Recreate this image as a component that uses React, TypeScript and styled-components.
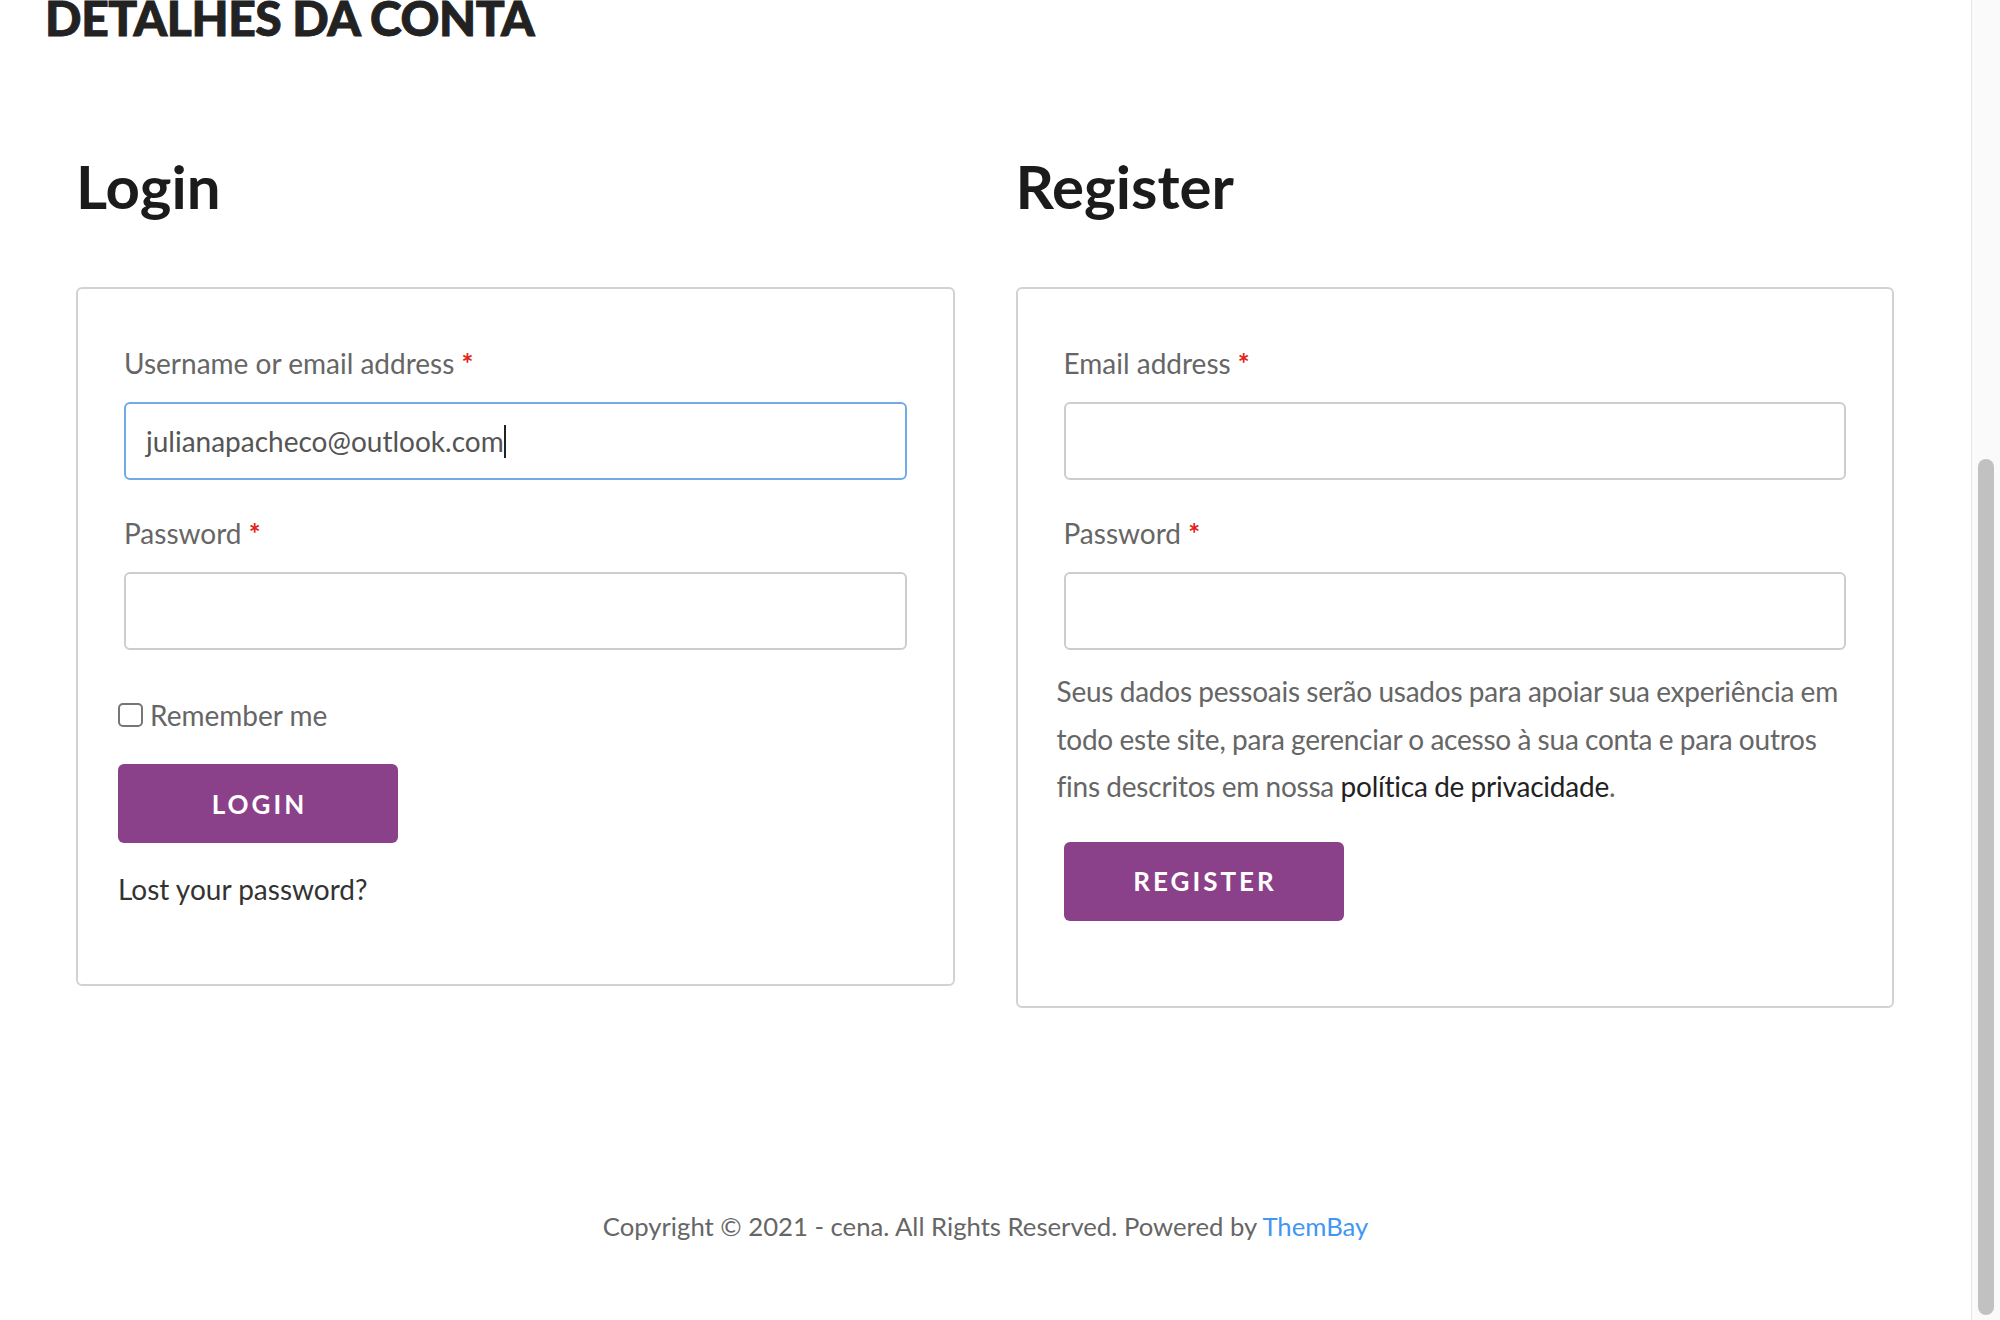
import React from "react";
import styled, { createGlobalStyle } from "styled-components";

const GlobalStyle = createGlobalStyle`
  * { box-sizing: border-box; }
  html, body { margin: 0; padding: 0; background: #ffffff; }
  body { font-family: Lato, "Open Sans", Arial, sans-serif; overflow: hidden; }
`;

const Page = styled.div`
  display: flex;
  width: 2000px;
  height: 1320px;
  overflow: hidden;
  background: #ffffff;
`;

const Main = styled.main`
  flex: 1;
  display: flex;
  flex-direction: column;
  min-width: 0;
`;

const PageHeading = styled.h1`
  margin: -11px 0 0 45px;
  font-family: Lato, sans-serif;
  font-weight: 900;
  font-size: 48px;
  line-height: 58px;
  color: #222222;
  letter-spacing: -0.4px;
  -webkit-text-stroke: 0.9px #222222;
`;

const Columns = styled.div`
  display: grid;
  grid-template-columns: 1fr 1fr;
  column-gap: 61px;
  align-items: start;
  padding: 0 77px 0 76px;
  margin-top: 103px;
`;

const Column = styled.section`
  display: flex;
  flex-direction: column;
`;

const ColumnTitle = styled.h2`
  margin: 0 0 65px 0;
  font-family: Lato, sans-serif;
  font-weight: 700;
  font-size: 60px;
  line-height: 72px;
  color: #1b1b1b;
`;

const FormBox = styled.form`
  display: flex;
  flex-direction: column;
  border: 2px solid #d3d1d1;
  border-radius: 6px;
  padding: 53px 46px 46px;
  margin: 0;
`;

const Field = styled.div<{ $last?: boolean }>`
  display: flex;
  flex-direction: column;
  margin-bottom: ${(p) => (p.$last ? "0" : "32px")};
`;

const Label = styled.label`
  display: block;
  font-size: 28px;
  line-height: 42px;
  color: #666666;
  margin-bottom: 18px;
`;

const Required = styled.span`
  color: #e2231a;
  font-weight: 700;
`;

const TextInput = styled.input`
  display: block;
  width: 100%;
  height: 78px;
  border: 2px solid #cdcdcd;
  border-radius: 6px;
  padding: 0 20px;
  font-family: Lato, sans-serif;
  font-size: 28px;
  color: #555555;
  background: #ffffff;
  outline: none;
`;

const FocusedField = styled.div`
  display: flex;
  align-items: center;
  width: 100%;
  height: 78px;
  border: 2px solid #72aae5;
  border-radius: 6px;
  padding: 0 20px;
  font-size: 28px;
  color: #555555;
  background: #ffffff;
`;

const Caret = styled.span`
  display: inline-block;
  width: 2px;
  height: 33px;
  background: #222222;
`;

const RememberRow = styled.label`
  display: flex;
  align-items: center;
  gap: 7px;
  margin: 44px 0 0 -6px;
  font-size: 28px;
  line-height: 42px;
  color: #666666;
`;

const CheckBox = styled.input`
  appearance: none;
  -webkit-appearance: none;
  margin: 0;
  width: 25px;
  height: 24px;
  border: 2px solid #767676;
  border-radius: 5px;
  background: #ffffff;
`;

const PrimaryButton = styled.button<{ $indent?: number; $top: number; $bottom?: number }>`
  display: flex;
  align-items: center;
  justify-content: center;
  width: 280px;
  height: 79px;
  margin: ${(p) => p.$top}px 0 ${(p) => p.$bottom ?? 0}px ${(p) => p.$indent ?? 0}px;
  padding: 0 0 0 3px;
  border: none;
  border-radius: 6px;
  background: #8b4189;
  color: #ffffff;
  font-family: Lato, sans-serif;
  font-weight: 700;
  font-size: 26px;
  letter-spacing: 3px;
  text-transform: uppercase;
`;

const LostLink = styled.a`
  display: block;
  margin: 25px 0 28px -6px;
  font-size: 28px;
  line-height: 42px;
  color: #333333;
  text-decoration: none;
`;

const Privacy = styled.p`
  margin: 18px -12px 0 -7px;
  font-size: 28px;
  line-height: 47.6px;
  letter-spacing: -0.22px;
  word-spacing: -0.5px;
  color: #666666;
`;

const PrivacyLink = styled.a`
  color: #222222;
  text-decoration: none;
`;

const Footer = styled.footer`
  margin-top: 199px;
  text-align: center;
  font-size: 25.7px;
  line-height: 39px;
  color: #666666;
`;

const FooterLink = styled.a`
  color: #3f97f3;
  text-decoration: none;
`;

const ScrollTrack = styled.div`
  width: 29px;
  height: 1320px;
  display: flex;
  flex-direction: column;
  padding: 459px 6px 5px 6px;
  background: #fafafa;
  border-left: 1px solid #e6e6e6;
`;

const ScrollThumb = styled.div`
  flex: 1;
  width: 16px;
  border-radius: 8px;
  background: #c1c1c1;
`;

export default function App() {
  return (
    <>
      <GlobalStyle />
      <Page>
        <Main>
          <PageHeading>DETALHES DA CONTA</PageHeading>
          <Columns>
            <Column>
              <ColumnTitle>Login</ColumnTitle>
              <FormBox onSubmit={(e) => e.preventDefault()}>
                <Field>
                  <Label>
                    Username or email address <Required>*</Required>
                  </Label>
                  <FocusedField>
                    julianapacheco@outlook.com
                    <Caret />
                  </FocusedField>
                </Field>
                <Field $last>
                  <Label>
                    Password <Required>*</Required>
                  </Label>
                  <TextInput type="password" />
                </Field>
                <RememberRow>
                  <CheckBox type="checkbox" />
                  Remember me
                </RememberRow>
                <PrimaryButton type="button" $top={28} $indent={-6}>
                  Login
                </PrimaryButton>
                <LostLink href="#">Lost your password?</LostLink>
              </FormBox>
            </Column>
            <Column>
              <ColumnTitle>Register</ColumnTitle>
              <FormBox onSubmit={(e) => e.preventDefault()}>
                <Field>
                  <Label>
                    Email address <Required>*</Required>
                  </Label>
                  <TextInput type="email" />
                </Field>
                <Field $last>
                  <Label>
                    Password <Required>*</Required>
                  </Label>
                  <TextInput type="password" />
                </Field>
                <Privacy>
                  Seus dados pessoais serão usados para apoiar sua experiência em todo
                  este site, para gerenciar o acesso à sua conta e para outros fins
                  descritos em nossa <PrivacyLink href="#">política de privacidade</PrivacyLink>.
                </Privacy>
                <PrimaryButton type="button" $top={31} $bottom={39}>
                  Register
                </PrimaryButton>
              </FormBox>
            </Column>
          </Columns>
          <Footer>
            Copyright © 2021 - cena. All Rights Reserved. Powered by{" "}
            <FooterLink href="#">ThemBay</FooterLink>
          </Footer>
        </Main>
        <ScrollTrack>
          <ScrollThumb />
        </ScrollTrack>
      </Page>
    </>
  );
}
